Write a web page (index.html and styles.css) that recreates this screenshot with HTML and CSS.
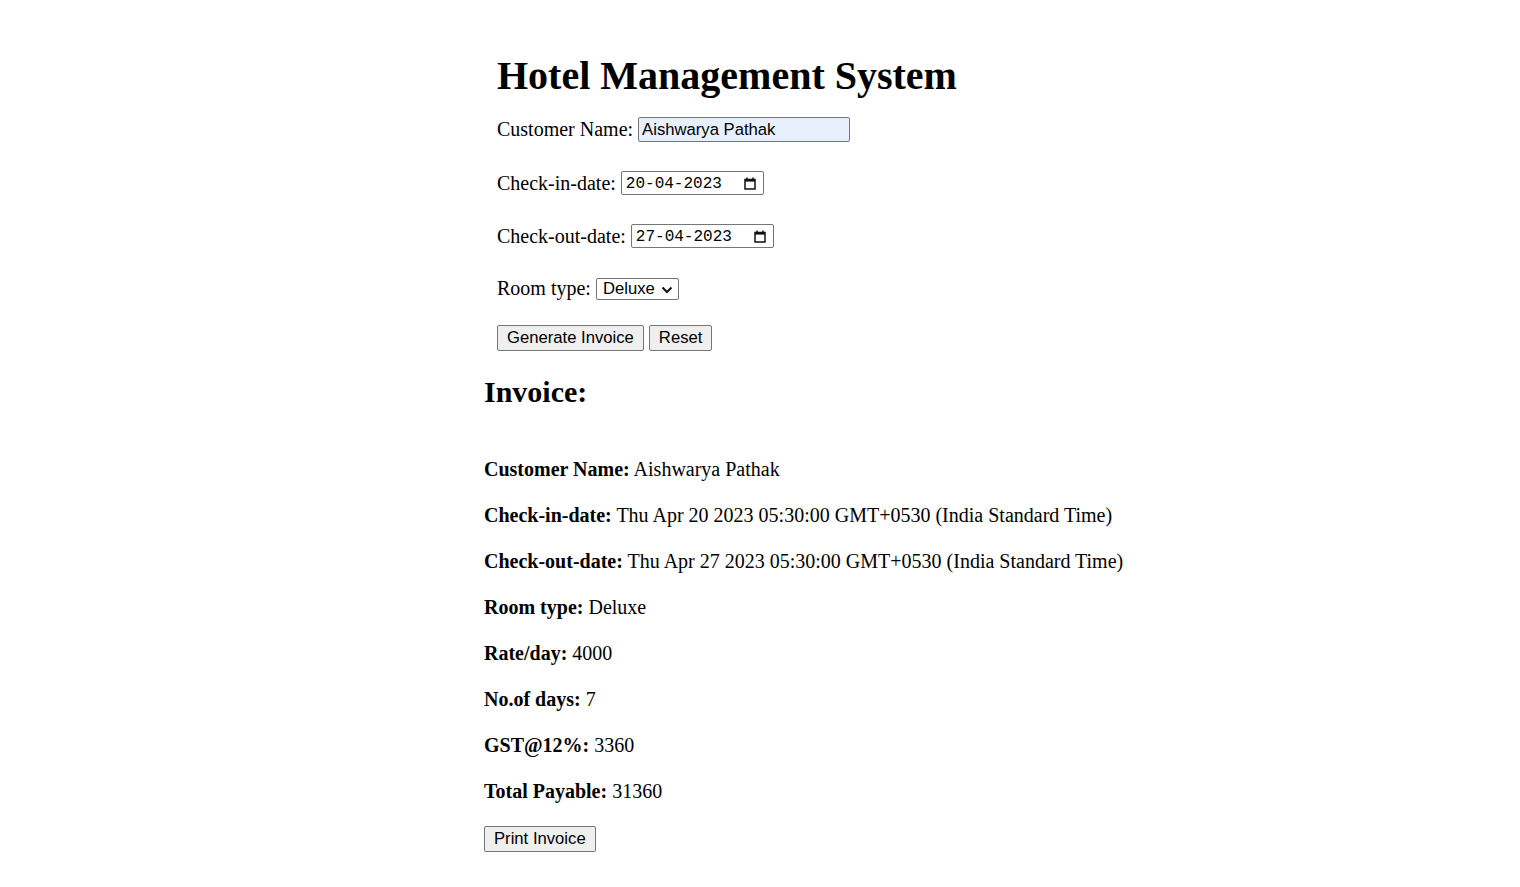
FILE: index.html
```html
<!DOCTYPE html>
<html lang="en">
<head>
<meta charset="utf-8">
<title>Hotel Management System</title>
<link rel="stylesheet" href="styles.css">
</head>
<body>
<div class="page">
  <form class="booking">
    <h1 class="title">Hotel Management System</h1>
    <div class="row">
      <label class="field-label">Customer Name:</label>
      <input class="text-input" type="text" value="Aishwarya Pathak">
    </div>
    <div class="row row-gap">
      <label class="field-label">Check-in-date:</label>
      <span class="date-field">
        <span class="date-value">20-04-2023</span>
        <svg class="cal-icon" width="12" height="13" viewBox="0 0 12 13"><path d="M1 2.5h10v9.5H1z" fill="none" stroke="#111" stroke-width="1.5"/><path d="M1 2h10v2.6H1z" fill="#111"/><path d="M3 0.5v2M9 0.5v2" stroke="#111" stroke-width="1.5"/></svg>
      </span>
    </div>
    <div class="row row-gap">
      <label class="field-label">Check-out-date:</label>
      <span class="date-field">
        <span class="date-value">27-04-2023</span>
        <svg class="cal-icon" width="12" height="13" viewBox="0 0 12 13"><path d="M1 2.5h10v9.5H1z" fill="none" stroke="#111" stroke-width="1.5"/><path d="M1 2h10v2.6H1z" fill="#111"/><path d="M3 0.5v2M9 0.5v2" stroke="#111" stroke-width="1.5"/></svg>
      </span>
    </div>
    <div class="row row-select">
      <label class="field-label">Room type:</label>
      <span class="select-wrap">
        <select class="select"><option>Deluxe</option><option>Standard</option><option>Suite</option></select>
        <svg class="chevron" width="12" height="8" viewBox="0 0 12 8"><path d="M1.5 1.5l4.5 4.5 4.5-4.5" fill="none" stroke="#111" stroke-width="2"/></svg>
      </span>
    </div>
    <div class="row row-buttons">
      <button class="btn" type="button">Generate Invoice</button>
      <button class="btn" type="reset">Reset</button>
    </div>
  </form>
  <section class="invoice">
    <h2 class="invoice-title">Invoice:</h2>
    <p class="line"><strong>Customer Name:</strong> Aishwarya Pathak</p>
    <p class="line"><strong>Check-in-date:</strong> Thu Apr 20 2023 05:30:00 GMT+0530 (India Standard Time)</p>
    <p class="line"><strong>Check-out-date:</strong> Thu Apr 27 2023 05:30:00 GMT+0530 (India Standard Time)</p>
    <p class="line"><strong>Room type:</strong> Deluxe</p>
    <p class="line"><strong>Rate/day:</strong> 4000</p>
    <p class="line"><strong>No.of days:</strong> 7</p>
    <p class="line"><strong>GST@12%:</strong> 3360</p>
    <p class="line"><strong>Total Payable:</strong> 31360</p>
    <div class="print-row"><button class="btn" type="button">Print Invoice</button></div>
  </section>
</div>
</body>
</html>
```

FILE: styles.css
```css
* { box-sizing: border-box; }

html, body {
  margin: 0;
  background: #fff;
  color: #000;
}

body {
  font-family: "Liberation Serif", "Times New Roman", serif;
  font-size: 20px;
}

.page {
  width: 552px;
  margin: 0 auto;
  padding-top: 10px;
}

.booking {
  padding: 13px;
  margin: 0;
}

.title {
  font-size: 40px;
  line-height: 46px;
  font-weight: bold;
  margin: 29.5px 0 18.5px;
  white-space: nowrap;
}

.row {
  display: flex;
  align-items: center;
  gap: 5px;
  white-space: nowrap;
}

.row-gap { margin-top: 29px; }
.row-select { margin-top: 29px; }
.row-buttons { margin-top: 25px; }

.field-label {
  line-height: 23px;
}

.text-input {
  width: 212px;
  height: 25px;
  padding: 0 3px;
  border: 1px solid #767676;
  border-radius: 2px;
  background: #e8f0fe;
  font-family: "Liberation Sans", Arial, sans-serif;
  font-size: 16.67px;
  color: #000;
  outline: none;
}

.date-field {
  display: inline-flex;
  align-items: center;
  justify-content: space-between;
  width: 143px;
  height: 24px;
  padding: 1px 7px 0 4px;
  border: 1px solid #767676;
  border-radius: 2px;
  background: #fff;
}

.date-value {
  font-family: "Liberation Mono", "Courier New", monospace;
  font-size: 16px;
  line-height: 20px;
}

.cal-icon { display: block; }

.select-wrap {
  position: relative;
  display: inline-block;
  height: 22px;
}

.select {
  -webkit-appearance: none;
  appearance: none;
  width: 83px;
  height: 22px;
  padding: 0 0 0 6px;
  border: 1px solid #767676;
  border-radius: 2px;
  background: #fff;
  font-family: "Liberation Sans", Arial, sans-serif;
  font-size: 16.67px;
  color: #000;
  display: block;
}

.chevron {
  position: absolute;
  right: 6px;
  top: 8px;
  pointer-events: none;
}

.btn {
  height: 26px;
  padding: 0 9px;
  border: 1px solid #767676;
  border-radius: 2px;
  background: #efefef;
  font-family: "Liberation Sans", Arial, sans-serif;
  font-size: 16.67px;
  color: #000;
  line-height: 20px;
}

.invoice-title {
  font-size: 30px;
  line-height: 34.5px;
  font-weight: bold;
  margin: 10.5px 0 46.5px;
}

.line {
  font-size: 20px;
  line-height: 26px;
  margin: 20px 0;
  white-space: nowrap;
}

.print-row {
  display: flex;
  margin-top: 22px;
  padding-bottom: 20px;
}
```
